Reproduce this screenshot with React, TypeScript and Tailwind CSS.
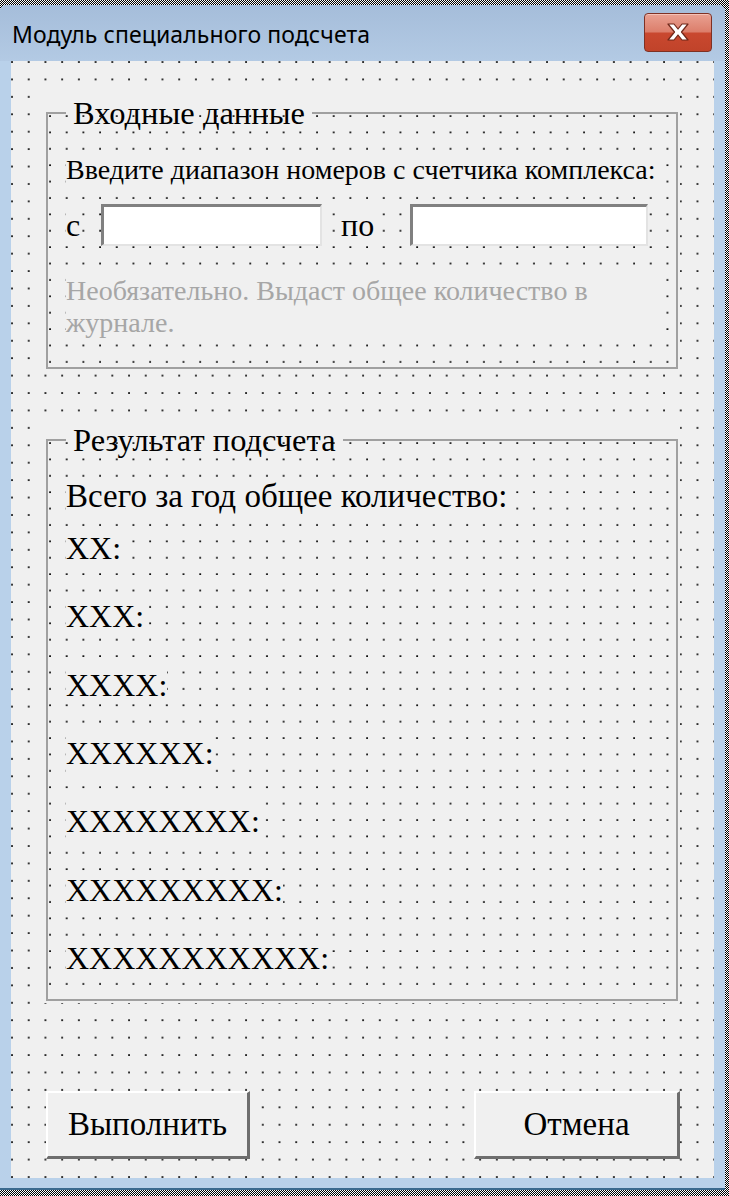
import React from 'react';

const serif = "font-['Liberation_Serif','Times_New_Roman',serif]";

const rows = ['XX:', 'XXX:', 'XXXX:', 'XXXXXX:', 'XXXXXXXX:', 'XXXXXXXXX:', 'XXXXXXXXXXX:'];

const CloseIcon = () => (
  <svg width="28" height="22" viewBox="0 0 28 22">
    <path
      d="M4 3 L10 3 L14 8 L18 3 L24 3 L17.5 11 L24 19 L18 19 L14 14 L10 19 L4 19 L10.5 11 Z"
      fill="#ffffff"
      stroke="#6f2618"
      strokeWidth="1.2"
      strokeLinejoin="round"
    />
  </svg>
);

const inputCls =
  'h-[42px] bg-white border-t-[3px] border-l-[3px] border-t-[#808080] border-l-[#808080] border-b-2 border-r-2 border-b-[#e3e3e3] border-r-[#e3e3e3] outline-none';

const btnCls = `${serif} h-[68px] bg-[#f0f0f0] border-t-2 border-l-2 border-t-white border-l-white border-b-[3px] border-r-[3px] border-b-[#6e6e6e] border-r-[#6e6e6e] text-[33px] text-black`;

const App = () => {
  return (
    <div className="w-[729px] h-[1196px] overflow-hidden bg-[repeating-conic-gradient(#000_0_25%,#fff_0_50%)] bg-[length:2px_2px]">
      <div className="mt-[5px] w-[725px] h-[1185px] flex flex-col bg-[#b9d1ea] rounded-t-[6px] border-b-2 border-b-[#3b6a8f]">
        {/* title bar */}
        <div className="h-[56px] flex items-center justify-between pl-[12px] pr-[13px] rounded-t-[6px] bg-gradient-to-b from-[#a5bdda] to-[#b3cae4]">
          <span className="font-['Noto_Sans',sans-serif] text-[23px] text-black tracking-[0.1px] mt-[2px]">
            Модуль специального подсчета
          </span>
          <div className="w-[68px] h-[39px] mb-[2px] rounded-[4px] border border-[#7e3124] bg-[linear-gradient(to_bottom,#e9a192_0%,#dc7e6b_48%,#c9482f_52%,#c0432a_100%)] flex items-center justify-center shadow-[inset_0_1px_0_#f4c2b7]">
            <CloseIcon />
          </div>
        </div>

        {/* form body */}
        <div className="mx-[11px] flex-1 bg-[#f0f0f0] bg-[radial-gradient(circle_at_1px_1px,#000_0.6px,transparent_1px)] bg-[length:16.72px_17.43px] flex flex-col">
          {/* frame 1 */}
          <div className="mt-[34px] ml-[33px] w-[636px] pt-[2px] pl-[2px] pb-[2px] bg-[#f0f0f0]">
            <fieldset className="w-[632px] border-2 border-[#a0a0a0] pl-[18px] pb-[28px] bg-[radial-gradient(circle_at_2px_2px,#000_0.6px,transparent_1px)] bg-[length:16.7px_16.4px]">
              <legend className={`${serif} ml-0 px-[7px] text-[32.5px] leading-[32px] text-black`}>Входные данные</legend>
              <p className={`${serif} mt-[25px] text-[28px] leading-[32px] text-black`}>
                <span className="bg-[#f0f0f0]">Введите диапазон номеров с счетчика комплекса:</span>
              </p>
              <div className={`${serif} mt-[18px] flex items-center h-[42px] text-[32px] text-black`}>
                <span className="w-[35px]">
                  <span className="bg-[#f0f0f0]">с</span>
                </span>
                <input className={`w-[221px] ${inputCls}`} />
                <span className="w-[88px] pl-[19px]">
                  <span className="bg-[#f0f0f0]">по</span>
                </span>
                <input className={`w-[238px] ${inputCls}`} />
              </div>
              <p className={`${serif} mt-[29px] w-[590px] text-[28px] leading-[32px] text-[#a6a6a6] bg-[#f0f0f0]`}>
                Необязательно. Выдаст общее количество в журнале.
              </p>
            </fieldset>
          </div>

          {/* frame 2 */}
          <div className="mt-[51px] ml-[33px] w-[636px] pt-[2px] pl-[2px] pb-[2px] bg-[#f0f0f0]">
            <fieldset className="w-[632px] border-2 border-[#a0a0a0] pl-[18px] pb-[7px] bg-[radial-gradient(circle_at_2px_2px,#000_0.6px,transparent_1px)] bg-[length:16.7px_16.4px]">
              <legend className={`${serif} ml-0 px-[7px] text-[32.5px] leading-[32px] text-black`}>Результат подсчета</legend>
              <div className={`${serif} mt-[20px] h-[40px] flex items-center text-[33px] text-black`}>
                <span className="bg-[#f0f0f0] leading-[38px]">Всего за год общее количество:</span>
              </div>
              <div className="-mt-[2px] flex flex-col">
                {rows.map((r) => (
                  <div key={r} className={`${serif} h-[68.33px] flex items-center text-[32px] text-black`}>
                    <span className="bg-[#f0f0f0] leading-[38px]">{r}</span>
                  </div>
                ))}
              </div>
            </fieldset>
          </div>

          {/* buttons */}
          <div className="mt-[88px] ml-[35px] w-[634px] flex justify-between">
            <button className={`w-[204px] ${btnCls}`}>Выполнить</button>
            <button className={`w-[206px] ${btnCls}`}>Отмена</button>
          </div>
        </div>

        <div className="h-[10px]" />
      </div>
    </div>
  );
};

export default App;
